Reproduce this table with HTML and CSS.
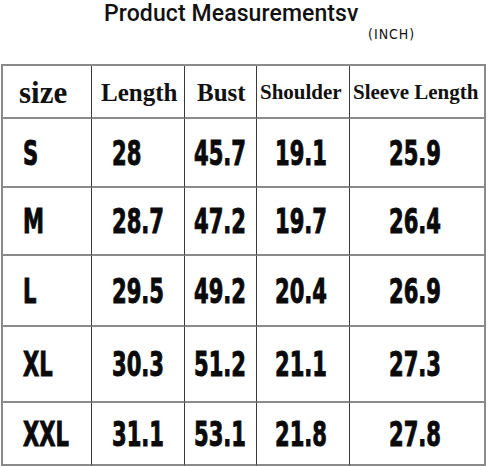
FILE: index.html
```html
<!DOCTYPE html>
<html>
<head>
<meta charset="utf-8">
<link rel="stylesheet" href="styles.css">
</head>
<body>
<div class="page">
  <h1 class="title">Product Measurementsv</h1>
  <div class="unit">(INCH)</div>
  <div class="table">
    <div class="cell head h-size">size</div>
    <div class="cell head h-len">Length</div>
    <div class="cell head h-bust">Bust</div>
    <div class="cell head h-sm">Shoulder</div>
    <div class="cell head h-sm h-sleeve">Sleeve Length</div>

    <div class="cell c1"><span class="num">S</span></div>
    <div class="cell c2"><span class="num">28</span></div>
    <div class="cell c3"><span class="num">45.7</span></div>
    <div class="cell c4"><span class="num">19.1</span></div>
    <div class="cell c5"><span class="num">25.9</span></div>

    <div class="cell c1"><span class="num">M</span></div>
    <div class="cell c2"><span class="num">28.7</span></div>
    <div class="cell c3"><span class="num">47.2</span></div>
    <div class="cell c4"><span class="num">19.7</span></div>
    <div class="cell c5"><span class="num">26.4</span></div>

    <div class="cell c1"><span class="num">L</span></div>
    <div class="cell c2"><span class="num">29.5</span></div>
    <div class="cell c3"><span class="num">49.2</span></div>
    <div class="cell c4"><span class="num">20.4</span></div>
    <div class="cell c5"><span class="num">26.9</span></div>

    <div class="cell c1"><span class="num">XL</span></div>
    <div class="cell c2"><span class="num">30.3</span></div>
    <div class="cell c3"><span class="num">51.2</span></div>
    <div class="cell c4"><span class="num">21.1</span></div>
    <div class="cell c5"><span class="num">27.3</span></div>

    <div class="cell c1"><span class="num">XXL</span></div>
    <div class="cell c2"><span class="num">31.1</span></div>
    <div class="cell c3"><span class="num">53.1</span></div>
    <div class="cell c4"><span class="num">21.8</span></div>
    <div class="cell c5"><span class="num">27.8</span></div>
  </div>
</div>
</body>
</html>
```
FILE: styles.css
```css
html, body {
  margin: 0;
  padding: 0;
  background: #ffffff;
}
.page {
  width: 488px;
  height: 466px;
  overflow: hidden;
  color: #111;
}
.title {
  margin: 0;
  padding: 0 0 0 104px;
  height: 24px;
  font-family: Roboto, "Noto Sans", sans-serif;
  font-weight: 500;
  font-size: 23px;
  line-height: normal;
  letter-spacing: 0.1px;
  color: #111;
}
.unit {
  padding-left: 368px;
  height: 22px;
  font-family: "DejaVu Sans Condensed", "DejaVu Sans", sans-serif;
  font-size: 14px;
  line-height: 20px;
  letter-spacing: 1px;
  color: #111;
}
.table {
  margin-top: 18px;
  margin-left: 1px;
  display: grid;
  grid-template-columns: 89px 93px 72px 93px 136px;
  grid-template-rows: 53px 69px 68px 71px 76px 63px;
  width: 485px;
  box-sizing: border-box;
  border-top: 2px solid #8a8a8a;
  border-left: 2px solid #8a8a8a;
}
.cell {
  box-sizing: border-box;
  border-right: 1px solid #3a3a3a;
  border-bottom: 2px solid #8a8a8a;
  display: flex;
  align-items: center;
  overflow: visible;
  white-space: nowrap;
}
.cell:nth-child(5n) {
  border-right: 2px solid #8a8a8a;
}
.head {
  font-family: "Liberation Serif", "Times New Roman", serif;
  font-weight: 700;
  color: #111;
  padding-top: 2px;
}
.h-size {
  font-size: 31px;
  padding-left: 16px;
}
.h-len {
  font-size: 25px;
  padding-left: 9px;
}
.h-bust {
  font-size: 25px;
  padding-left: 12px;
}
.h-sm {
  font-size: 21px;
  padding-left: 3px;
}
.h-sleeve {
  padding-left: 3px;
}
.num {
  display: inline-block;
  font-family: "DejaVu Sans", sans-serif;
  font-weight: 700;
  font-size: 34px;
  line-height: 34px;
  color: #0a0a0a;
  transform: scaleX(0.62);
  transform-origin: left center;
  -webkit-text-stroke: 1px #0a0a0a;
}
.c1 { padding-left: 20px; }
.c2 { padding-left: 20px; }
.c3 { padding-left: 9px; }
.c4 { padding-left: 18px; }
.c5 { padding-left: 39px; }
```
